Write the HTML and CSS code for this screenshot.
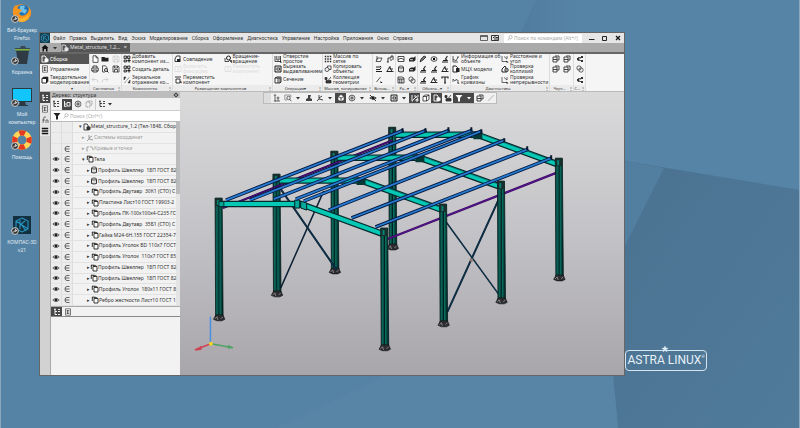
FILE: index.html
```html
<!DOCTYPE html>
<html lang="ru">
<head>
<meta charset="utf-8">
<title>КОМПАС-3D</title>
<link rel="stylesheet" href="styles.css">
</head>
<body>
<svg class="defs" aria-hidden="true">
  <defs>
    <symbol id="doc" viewBox="0 0 8 8"><path d="M2 .8h3l2 2v4.6H2zM5 .8v2h2" fill="#fff" stroke="#333" stroke-width=".8"/></symbol>
    <symbol id="folder" viewBox="0 0 8 8"><path d="M.5 2h3l.7.8h3.3V6.500H.5z" fill="#222"/></symbol>
    <symbol id="save" viewBox="0 0 8 8"><path d="M1 1h5l1 1v5H1zM2.500 1v2h3V1M2.500 7V4.500h3V7" fill="none" stroke="currentColor" stroke-width=".8"/></symbol>
    <symbol id="print" viewBox="0 0 8 8"><path d="M2 3V1h4v2M2 6H.8V3h6.400v3H6M2 5h4v2H2z" fill="none" stroke="#333" stroke-width=".9"/></symbol>
    <symbol id="preview" viewBox="0 0 8 8"><path d="M1.500.8h3l1.500 2V4M1.500.8V7H4" fill="none" stroke="#333" stroke-width=".8"/><circle cx="5" cy="5" r="1.500" fill="none" stroke="#222" stroke-width=".9"/><path d="m6 6 1.500 1.500" stroke="#222"/></symbol>
    <symbol id="undo" viewBox="0 0 8 8"><path d="M3 1.500 1 3.500l2 2M1 3.500h4q2 0 2 3" fill="none" stroke="#ccc" stroke-width=".8"/></symbol>
    <symbol id="redo" viewBox="0 0 8 8"><path d="m5 1.500 2 2-2 2M7 3.500H3q-2 0-2 3" fill="none" stroke="#ccc" stroke-width=".8"/></symbol>
    <symbol id="solid" viewBox="0 0 8 8"><path d="M1 2.500h4.500V7H1z" fill="#fff" stroke="#222"/><path d="M1 2.500 2.500 1H7L5.500 2.500zM7 1v4.500L5.500 7V2.500z" fill="#222" stroke="#222" stroke-width=".6"/></symbol>
    <symbol id="sheet" viewBox="0 0 8 8"><path d="M1.500.8h5v6.400h-5zM2.500 2.500h3M2.500 4h3M2.500 5.500h3M3.500 2v4" fill="#fff" stroke="#444" stroke-width=".7"/></symbol>
    <symbol id="assembly" viewBox="0 0 8 8"><path d="M1 1h3l1 1v5H1z" fill="none" stroke="currentColor" stroke-width=".9"/><path d="M3.500 4 5.500 3l2 1v2.500l-2 1-2-1z" fill="currentColor"/></symbol>
    <symbol id="add" viewBox="0 0 8 8"><path d="M1 1h2.500v2.500H1zM1 5h2.500v2H1zM4.500 1H7v2.500H4.500z" fill="#bbb" stroke="#222" stroke-width=".8"/><path d="M4.200 5.700h3.500M6 4v3.500" stroke="#111" stroke-width="1"/></symbol>
    <symbol id="mirror" viewBox="0 0 8 8"><path d="M1 1v3l2-3zM7 4v3H5z" fill="#333" stroke="#333" stroke-width=".5"/><path d="m1.500 7 5-6" stroke="#444" stroke-width=".7" stroke-dasharray="1.200 .6"/></symbol>
    <symbol id="mate" viewBox="0 0 8 8"><path d="M1 6.500V4l1.500-3H6v3L4 6.500z" fill="#fff" stroke="#222" stroke-width=".9"/><path d="M3 4h3.500v3H3z" fill="#222"/></symbol>
    <symbol id="rotate" viewBox="0 0 8 8"><circle cx="4.500" cy="3" r="2" fill="none" stroke="#222"/><path d="M1 3v3.500h4M5.500 5.500l2 2v-2z" fill="none" stroke="#222" stroke-width=".8"/></symbol>
    <symbol id="ghost" viewBox="0 0 8 8"><path d="M1 1.500h6v5H1zM4 1.500v5" fill="none" stroke="#ddd" stroke-width=".8"/></symbol>
    <symbol id="region" viewBox="0 0 8 8"><path d="M1 2h4v5H1zM3 2V1h4v4H5" fill="none" stroke="#888" stroke-width=".8" stroke-dasharray="1.500 .7"/></symbol>
    <symbol id="move" viewBox="0 0 8 8"><path d="M1 1h6M2 3h4v4H2z" fill="#fff" stroke="#222" stroke-width=".9"/><path d="M5.500 5.500 7.500 7.500v-2z"/></symbol>
    <symbol id="hole" viewBox="0 0 8 8"><path d="M1 1v5.500h5.500V1M2.800 1v4H5V1" fill="none" stroke="#222" stroke-width=".8"/><path d="m6 5.500 2 2h-2z"/></symbol>
    <symbol id="cut" viewBox="0 0 8 8"><path d="M1 1h6v6H1z" fill="#ddd" stroke="#222"/><path d="M3 5V3h2.500v2z" fill="#fff" stroke="#222" stroke-width=".8"/></symbol>
    <symbol id="section" viewBox="0 0 8 8"><path d="M1 2 3 1h4v5L6 7H1zM4 2v5M1 2h5v5" fill="#fff" stroke="#222" stroke-width=".9"/></symbol>
    <symbol id="grid" viewBox="0 0 8 8"><path d="M.8 1.500h6.400M.8 4h6.400M.8 6.500h6.400" stroke="#222" stroke-width="1.300" stroke-dasharray="1.400 1.100"/></symbol>
    <symbol id="copy" viewBox="0 0 8 8"><circle cx="3" cy="4.500" r="2" fill="none" stroke="#333" stroke-width=".8"/><path d="M3.500 2.500V1H7v3.500H5" fill="none" stroke="#333" stroke-width=".8"/></symbol>
    <symbol id="curve" viewBox="0 0 8 8"><path d="M1 6V2h2M4 1.500q3 0 3 3M.5 6h1M6.500 4.500h1" fill="none" stroke="#333" stroke-width=".8"/></symbol>
    <symbol id="collection" viewBox="0 0 8 8"><path d="M1 1.500h2v2H1zM4.500 4 7 1M2 4.500h5V7H2z" fill="#333" stroke="#333" stroke-width=".8"/></symbol>
    <symbol id="plane" viewBox="0 0 8 8"><path d="M1 6.500 2.500 3H7L5.500 6.500zM2 1v4" fill="none" stroke="#333" stroke-width=".8"/></symbol>
    <symbol id="axis" viewBox="0 0 8 8"><path d="M2 7V3h3V1M5 1h2v4M.8 7h2M4 5h2" fill="none" stroke="#222" stroke-width=".9"/></symbol>
    <symbol id="offset" viewBox="0 0 8 8"><path d="M1 2h4L6 1M1 4.500h4l1-2M1 6.500h6" fill="none" stroke="#222" stroke-width="1"/></symbol>
    <symbol id="datum" viewBox="0 0 8 8"><path d="M1 6.500 3.500 2 6 6.500zM.5 6.500h7M4 1v3h3" fill="none" stroke="#222" stroke-width=".9"/></symbol>
    <symbol id="line" viewBox="0 0 8 8"><path d="m1.500 6 4-5" stroke="#333" stroke-width=".8"/><path d="m5.500 5 2 2h-2z"/></symbol>
    <symbol id="box" viewBox="0 0 8 8"><path d="M1 1.500h6v5H1zM1 5l2-1.500h2L7 5" fill="#fff" stroke="#222" stroke-width=".8"/></symbol>
    <symbol id="bool" viewBox="0 0 8 8"><path d="M1 4 3 2.500h3L7.500 1v4L6 6.500H1z" fill="#222"/><path d="M2 4.700h3" stroke="#fff" stroke-width=".8"/></symbol>
    <symbol id="cyl" viewBox="0 0 8 8"><path d="M1.500 2v4.500q2.500 1 5 0V2" fill="#ddd" stroke="#222" stroke-width=".9"/><ellipse cx="4" cy="2" rx="2.500" ry="1" fill="#fff" stroke="#222" stroke-width=".8"/></symbol>
    <symbol id="table" viewBox="0 0 8 8"><path d="M1 1h4l2 1v5H1zM2.800 3v4M4.800 3v4M1 3h6" fill="none" stroke="#222" stroke-width=".8"/></symbol>
    <symbol id="link" viewBox="0 0 8 8"><rect x="1" y="1" width="4" height="4" rx="1.500" fill="none" stroke="#333" stroke-width=".8"/><rect x="3" y="3" width="4" height="4" rx="1.500" fill="none" stroke="#333" stroke-width=".8"/></symbol>
    <symbol id="pen" viewBox="0 0 8 8"><path d="M1 7 2 4l3-3 2 1-3 3z" fill="#777" stroke="#222" stroke-width=".8"/></symbol>
    <symbol id="note" viewBox="0 0 8 8"><path d="M1 7h6M2 5.500h4L4.500 4l2-3" fill="none" stroke="#222" stroke-width="1.100"/></symbol>
    <symbol id="target" viewBox="0 0 8 8"><ellipse cx="4" cy="4" rx="3" ry="2.300" fill="none" stroke="#222" stroke-width=".8"/><path d="M3 3h2v2H3z"/></symbol>
    <symbol id="letter" viewBox="0 0 8 8"><path d="M1 2.500V1h6v1.500M4 1v6M3 7h2" fill="none" stroke="#222" stroke-width="1.200"/></symbol>
    <symbol id="info" viewBox="0 0 8 8"><path d="M1 1v6h5M1 4l3 2 2-4M5 2h2" fill="none" stroke="#333" stroke-width=".8"/></symbol>
    <symbol id="mass" viewBox="0 0 8 8"><path d="M1 1h3l1.500 1.500V7H1z" fill="#fff" stroke="#222"/><path d="M4 3h3.500v4H4z" fill="#222"/></symbol>
    <symbol id="graph" viewBox="0 0 8 8"><path d="M1 6V3l2 2 1.500-2 1 2H7" fill="none" stroke="#444" stroke-width=".8"/><path d="m5.500 5.500 2 2h-2z"/></symbol>
    <symbol id="measure" viewBox="0 0 8 8"><path d="M1 1v5.500h5M3 1.500 6 4V1" fill="none" stroke="#444" stroke-width=".8"/><path d="m5.500 5.500 2 2h-2z"/></symbol>
    <symbol id="collide" viewBox="0 0 8 8"><path d="M1 7V4l3-3 1.500 3v3z" fill="#fff" stroke="#222"/><circle cx="5.500" cy="5" r="1.800" fill="#999" stroke="#222" stroke-width=".7"/></symbol>
    <symbol id="draw" viewBox="0 0 8 8"><path d="M1 2h4v5H1zM3 1h4v4H5M1 4.500h4" fill="none" stroke="#333" stroke-width=".9"/></symbol>
    <symbol id="connect" viewBox="0 0 8 8"><path d="M2 2.500h3l-3 3h4" fill="none" stroke="#333" stroke-width=".8"/><path d="M5 1h2v2H5zM5 5h2v2H5zM1 3h2v2H1z" fill="#333"/></symbol>
    <symbol id="tree" viewBox="0 0 8 8"><path d="M2 1v5.500h2M2 3.500h2M1 1.200h2M5 1.500h2M5 3.500h2M5 6.500h2" fill="none" stroke="currentColor" stroke-width=".9"/></symbol>
    <symbol id="branch" viewBox="0 0 8 8"><path d="M1.500 1v5.500h2M1.500 4h2M4 2.500h3v3.500H4z" fill="none" stroke="currentColor" stroke-width=".9"/></symbol>
    <symbol id="corner" viewBox="0 0 8 8"><path d="M2 .8V7h5M.8 1h2.400M5 2.500v4.500M3.500 4h3M.8 7h2" fill="none" stroke="#444" stroke-width=".8"/></symbol>
    <symbol id="fx" viewBox="0 0 8 8"><path d="M5 1H3L2 7M1 4h3M5 7V4h2v3" fill="none" stroke="#555" stroke-width=".8"/></symbol>
    <symbol id="bars" viewBox="0 0 8 8"><path d="M.8 1.500h6.400M.8 4h6.400M.8 6.500h6.400" stroke="#111" stroke-width="1.600"/></symbol>
    <symbol id="filter" viewBox="0 0 8 8"><path d="M.5 1h7L5 4v3.500H3V4z" fill="currentColor"/></symbol>
    <symbol id="zoom" viewBox="0 0 8 8"><circle cx="4.700" cy="3" r="2.200" fill="none" stroke="currentColor" stroke-width=".8"/><path d="M3.200 4.600.8 7.200" stroke="currentColor" stroke-width=".9"/></symbol>
    <symbol id="zoomarea" viewBox="0 0 8 8"><path d="M3 6H.8V1h6v2" fill="none" stroke="#777" stroke-width=".7"/><circle cx="4.500" cy="4" r="1.700" fill="none" stroke="#444" stroke-width=".8"/><path d="m5.700 5.200 1.600 2" stroke="#444" stroke-width=".9"/></symbol>
    <symbol id="brush" viewBox="0 0 8 8"><path d="m1 7 2-2 4-4" fill="none" stroke="#ccc" stroke-width="1.100"/></symbol>
    <symbol id="gear" viewBox="0 0 8 8"><circle cx="4" cy="4" r="2" fill="none" stroke="#333" stroke-width="1.300"/><path d="M4 .8v1M4 6.200v1M.8 4h1M6.200 4h1" stroke="#333"/></symbol>
    <symbol id="eye" viewBox="0 0 8 8"><path d="M.8 4Q4 .8 7.200 4 4 7.200.8 4z" fill="#bbb" stroke="#444" stroke-width=".7"/><circle cx="4" cy="4" r="1.300" fill="#222"/></symbol>
    <symbol id="in" viewBox="0 0 8 8"><path d="M6.500 1.500H4Q2 1.500 2 4t2 2.500h2.500M2 4h4.500" fill="none" stroke="#444" stroke-width=".8"/></symbol>
    <symbol id="body" viewBox="0 0 8 8"><path d="M3 2.500h4V7H3zM1 1.200h3.500M1.300 1v4" fill="#fff" stroke="#222" stroke-width=".9"/><path d="M3 1.200h3l1 1.300H3z" fill="#333"/></symbol>
    <symbol id="home" viewBox="0 0 8 8"><path d="M.5 4 4 .8 7.500 4H6.500v3.500H5V5H3v2.500H1.500V4z" fill="#111"/></symbol>
    <symbol id="cube" viewBox="0 0 8 8"><path d="M1 2.500h3.500V7H1zM1 2.500 3 1h4v4.500L4.500 7M7 1 4.500 2.500" fill="#fff" stroke="#111" stroke-width=".7"/></symbol>
    <symbol id="shaded" viewBox="0 0 8 8"><path d="M1 2.500 4 4v3.600L1 6zM1 2.500 4 .6l3 1.900L4 4zM7 2.500 4 4v3.600L7 6z" fill="#fff" stroke="#333" stroke-width=".5"/></symbol>
    <symbol id="wire" viewBox="0 0 8 8"><circle cx="4" cy="4" r="3" fill="none" stroke="#444" stroke-width=".7"/><path d="M4 1v6M1.500 2.500 6.500 5.500M6.500 2.500l-5 3" stroke="#444" stroke-width=".7"/></symbol>
    <symbol id="orient" viewBox="0 0 8 8"><path d="M3 1v4l-2 2M3 5l4 1M3 4l3-2" fill="none" stroke="#333" stroke-width=".9"/></symbol>
    <symbol id="pin" viewBox="0 0 8 8"><path d="M3 1h3l-1 3 2 1v2H1V5l2-1z" fill="#444"/></symbol>
    <symbol id="hide" viewBox="0 0 8 8"><path d="M.8 4Q4 1 7.200 4 4 7 .8 4zM1 1l6 6" fill="none" stroke="#222" stroke-width=".9"/><circle cx="4" cy="4" r="1.100"/></symbol>
    <symbol id="swap" viewBox="0 0 8 8"><path d="M1 1v6h1M7 1v2M3 2h2l2 3M1.500 6.500 5 3M5 5.500h2v1.500H5z" fill="none" stroke="currentColor" stroke-width=".9"/></symbol>
    <symbol id="arrow" viewBox="0 0 8 8"><path d="M2 3h4L4 5.500z" fill="currentColor"/></symbol>
    <symbol id="shortcut" viewBox="0 0 8 8"><circle cx="4" cy="4" r="3.400" fill="#333" stroke="#ddd" stroke-width=".9"/><path d="M2.500 5.500q0-2 3-2M4 2l1.700 1.500L4.300 5" fill="none" stroke="#fff" stroke-width=".8"/></symbol>
  </defs>
</svg>

<svg class="wallpaper" viewBox="0 0 800 428" preserveAspectRatio="none" aria-hidden="true">
  <defs>
    <linearGradient id="fold" x1="0" y1="0" x2="1" y2="1"><stop offset="0" stop-color="#4a7190"/><stop offset="1" stop-color="#517b9b"/></linearGradient>
    <linearGradient id="upper" x1="0" y1="0" x2="1" y2="0"><stop offset="0" stop-color="#507d9f"/><stop offset=".2" stop-color="#5684a7"/></linearGradient>
  </defs>
  <path d="M0 0h800v428H0z" fill="#5583a5"/>
  <path d="M536 0h264v190L628 162l-107-130z" fill="url(#upper)"/>
  <path d="m625 161 175 29v238H618l-5-55z" fill="url(#fold)"/>
  <path d="m625 161 39 7-39 78z" fill="#527e9f"/>
  <path d="M383 376 276 428h342l-5-52z" fill="#5884a5"/>
  <path d="M0 0h1v428H0zM799 0h1v428h-1z" fill="#8aa9c0"/>
</svg>

<nav class="desktop" aria-label="Рабочий стол">
  <a class="shortcut firefox" href="#">
    <svg class="pic" viewBox="0 0 20 20"><circle cx="10" cy="10" r="9" fill="#f5931e"/><circle cx="11" cy="8" r="6.500" fill="#2273b5"/><path d="M8 3q3-1 5 0l-1 3 3 1-2 4-3-2-3 1z" fill="#6fc0e8"/><path d="M1 7q1-5 4-5-1 3 2 4l3 1-3 3q1 4 6 2 4-2 4-8 4 6 0 11-5 5-11 2-6-4-5-10z" fill="#f7941e"/><path d="M2 12q3 5 9 3 4-1 6-5 0 8-7 9-6 0-8-7z" fill="#fbb42c"/></svg>
    <svg class="mark"><use href="#shortcut"/></svg>
    <span>Веб-браузер<br>Firefox</span>
  </a>
  <a class="shortcut trash" href="#">
    <svg class="pic" viewBox="0 0 20 20"><path d="M4 5h13l-2 14H6z" fill="#2e3b45"/><path d="M3 3h5l1-2h4l1 2h4v3H3z" fill="#394852"/><path d="M3 4h15v1.500H3z" fill="#7fb23e"/></svg>
    <svg class="mark"><use href="#shortcut"/></svg>
    <span>Корзина</span>
  </a>
  <a class="shortcut computer" href="#">
    <svg class="pic" viewBox="0 0 20 20"><path d="M0 1h20v14H0z" fill="#2c3940"/><path d="M1 2h18v12H1z" fill="#12c6fb"/><path d="M8 15h5l1 3h2v1H5v-1h2z" fill="#2c3940"/></svg>
    <svg class="mark"><use href="#shortcut"/></svg>
    <span>Мой<br>компьютер</span>
  </a>
  <a class="shortcut help" href="#">
    <svg class="pic" viewBox="0 0 20 20"><circle cx="10" cy="10" r="7.200" fill="none" stroke="#ffd65a" stroke-width="5.200"/><circle cx="10" cy="10" r="7.200" fill="none" stroke="#e33b22" stroke-width="5.200" stroke-dasharray="5.650" stroke-dashoffset="2.800"/></svg>
    <svg class="mark"><use href="#shortcut"/></svg>
    <span>Помощь</span>
  </a>
  <a class="shortcut kompas" href="#">
    <svg class="pic" viewBox="0 0 20 20"><path d="M1 1h18v18H1z" fill="#12303f"/><path d="m10 3 6 3v8l-6 3-6-3V6zM4 6l12 8M8 5v9M8 10l5-4M9 9l5 7" fill="none" stroke="#2794c0" stroke-width="1.100"/></svg>
    <svg class="mark"><use href="#shortcut"/></svg>
    <span>КОМПАС-3D<br>v21</span>
  </a>
</nav>

<main class="window">
  <header class="menubar">
    <svg class="applogo" viewBox="0 0 10 10"><path d="M0 0h10v10H0z" fill="#154257"/><path d="m5 1 3.500 2v4L5 9 1.500 7V3zM3.500 3v4M3.500 5 6 3M4.500 5 7 7" fill="none" stroke="#3b9cbd" stroke-width=".7"/></svg>
    <nav class="menu"><a href="#">Файл</a><a href="#">Правка</a><a href="#">Выделить</a><a href="#">Вид</a><a href="#">Эскиз</a><a href="#">Моделирование</a><a href="#">Сборка</a><a href="#">Оформление</a><a href="#">Диагностика</a><a href="#">Управление</a><a href="#">Настройка</a><a href="#">Приложения</a><a href="#">Окно</a><a href="#">Справка</a></nav>
    <button class="tiny" aria-label="Экран"><svg viewBox="0 0 8 8"><path d="M.5 1.500h7v5h-7zM.5 2.500h7" fill="none" stroke="#444" stroke-width=".8"/></svg></button>
    <button class="tiny" aria-label="Панели"><svg viewBox="0 0 8 8"><path d="M.5 1.500h7v5h-7zM4 1.500v5M2 3.500h1M5 3.500h2M5 5h2" fill="none" stroke="#222" stroke-width=".9"/></svg></button>
    <label class="search top"><svg><use href="#zoom"/></svg><input type="text" placeholder="Поиск по командам (Alt+/)" aria-label="Поиск по командам"></label>
    <div class="controls">
      <button aria-label="Свернуть"><svg viewBox="0 0 8 8"><path d="M1 5.500h5.500" stroke="#222"/></svg></button>
      <button aria-label="Развернуть"><svg viewBox="0 0 8 8"><path d="M1.500 2.500h4v4h-4z" fill="none" stroke="#222"/></svg></button>
      <button aria-label="Закрыть"><svg viewBox="0 0 8 8"><path d="m2 2 4 4M6 2 2 6" stroke="#111" stroke-width="1.200"/></svg></button>
    </div>
  </header>

  <div class="tabs">
    <button aria-label="Главная"><svg><use href="#home"/></svg></button>
    <button aria-label="Список"><svg><use href="#arrow"/></svg></button>
    <button class="tab"><svg><use href="#assembly"/></svg><span>Metal_structure_1.2...</span><b>×</b></button>
  </div>

  <div class="ribbon">
    <section class="modes">
      <div class="rows">
        <button class="cmd on"><svg><use href="#assembly"/></svg><span>Сборка</span></button>
        <button class="cmd"><svg><use href="#sheet"/></svg><span>Управление</span></button>
        <button class="cmd"><svg><use href="#solid"/></svg><span>Твердотельное<br>моделирование</span></button>
      </div>
      <h2><i>▾</i></h2>
    </section>
    <section>
      <div class="icons three">
        <button aria-label="Создать"><svg><use href="#doc"/></svg></button><button aria-label="Открыть"><svg><use href="#folder"/></svg></button><button class="off" aria-label="Сохранить"><svg><use href="#save"/></svg></button>
        <button aria-label="Печать"><svg><use href="#print"/></svg></button><button aria-label="Просмотр"><svg><use href="#preview"/></svg></button><button aria-label="Сохранить как"><svg><use href="#save"/></svg></button>
        <button aria-label="Отменить"><svg><use href="#undo"/></svg></button><button aria-label="Повторить"><svg><use href="#redo"/></svg></button>
      </div>
      <h2>Системная<i>⋮</i></h2>
    </section>
    <section>
      <div class="rows">
        <button class="cmd"><svg><use href="#add"/></svg><span>Добавить<br>компонент из...</span></button>
        <button class="cmd"><svg><use href="#add"/></svg><span>Создать деталь</span></button>
        <button class="cmd"><svg><use href="#mirror"/></svg><span>Зеркальное<br>отражение ко...</span></button>
      </div>
      <h2>Компоненты<i>⋮</i></h2>
    </section>
    <section>
      <div class="rows two">
        <button class="cmd"><svg><use href="#mate"/></svg><span>Совпадение</span></button>
        <button class="cmd"><svg><use href="#rotate"/></svg><span>Вращение-<br>вращение</span></button>
        <button class="cmd faint" disabled><svg><use href="#ghost"/></svg><span>Включить<br>фиксацию</span></button>
        <button class="cmd faint" disabled><svg><use href="#ghost"/></svg><span>Разместить<br>компонент</span></button>
        <button class="cmd"><svg><use href="#move"/></svg><span>Переместить<br>компонент</span></button>
      </div>
      <h2>Размещение компонентов<i>⋮</i></h2>
    </section>
    <section>
      <div class="rows">
        <button class="cmd"><svg><use href="#hole"/></svg><span>Отверстие<br>простое</span></button>
        <button class="cmd"><svg><use href="#cut"/></svg><span>Вырезать<br>выдавливанием</span></button>
        <button class="cmd"><svg><use href="#section"/></svg><span>Сечение</span></button>
      </div>
      <h2>Операции<i>▾</i><i>⋮</i></h2>
    </section>
    <section>
      <div class="rows">
        <button class="cmd"><svg><use href="#grid"/></svg><span>Массив по<br>сетке</span></button>
        <button class="cmd"><svg><use href="#copy"/></svg><span>Копировать<br>объекты</span></button>
        <button class="cmd"><svg><use href="#collection"/></svg><span>Коллекция<br>геометрии</span></button>
      </div>
      <h2>Массив, копирование<i>⋮</i></h2>
    </section>
    <section>
      <div class="icons pair">
        <button aria-label="Плоскость"><svg><use href="#plane"/></svg></button><button aria-label="Ось"><svg><use href="#axis"/></svg></button>
        <button aria-label="Смещение"><svg><use href="#offset"/></svg></button><button aria-label="База"><svg><use href="#datum"/></svg></button>
        <button aria-label="Линия"><svg><use href="#line"/></svg></button>
      </div>
      <h2>Вспом...<i>⋮</i></h2>
    </section>
    <section>
      <div class="icons pair">
        <button aria-label="Размер"><svg><use href="#box"/></svg></button><button aria-label="Вычитание"><svg><use href="#bool"/></svg></button>
        <button aria-label="Цилиндр"><svg><use href="#cyl"/></svg></button><button aria-label="Объединение"><svg><use href="#bool"/></svg></button>
        <button aria-label="Таблица"><svg><use href="#table"/></svg></button><button aria-label="Связь"><svg><use href="#link"/></svg></button>
      </div>
      <h2>Ра...<i>▾</i><i>⋮</i></h2>
    </section>
    <section>
      <div class="icons three">
        <button aria-label="Резьба"><svg><use href="#pen"/></svg></button><button aria-label="Центр"><svg><use href="#target"/></svg></button><button aria-label="Выноска"><svg><use href="#note"/></svg></button>
        <button aria-label="Шероховатость"><svg><use href="#note"/></svg></button><button aria-label="Отметка"><svg><use href="#note"/></svg></button><button aria-label="Допуск"><svg><use href="#datum"/></svg></button>
        <button aria-label="Клеймо"><svg><use href="#note"/></svg></button><button aria-label="Основание"><svg><use href="#datum"/></svg></button><button aria-label="Текст"><svg><use href="#letter"/></svg></button>
      </div>
      <h2>Обозна...<i>▾</i><i>⋮</i></h2>
    </section>
    <section>
      <div class="rows two">
        <button class="cmd"><svg><use href="#info"/></svg><span>Информация об<br>объекте</span></button>
        <button class="cmd"><svg><use href="#measure"/></svg><span>Расстояние и<br>угол</span></button>
        <button class="cmd"><svg><use href="#mass"/></svg><span>МЦХ модели</span></button>
        <button class="cmd"><svg><use href="#collide"/></svg><span>Проверка<br>коллизий</span></button>
        <button class="cmd"><svg><use href="#graph"/></svg><span>График<br>кривизны</span></button>
        <button class="cmd"><svg><use href="#measure"/></svg><span>Проверка<br>непрерывности</span></button>
      </div>
      <h2>Диагностика<i>⋮</i></h2>
    </section>
    <section>
      <div class="icons pair">
        <button aria-label="Чертёж"><svg><use href="#draw"/></svg></button><button aria-label="Вид"><svg><use href="#draw"/></svg></button>
        <button aria-label="Лист"><svg><use href="#draw"/></svg></button><button aria-label="Разрез"><svg><use href="#draw"/></svg></button>
      </div>
      <h2>Черт...<i>⋮</i></h2>
    </section>
    <section>
      <div class="icons one">
        <button aria-label="Соединение"><svg><use href="#connect"/></svg></button>
        <button aria-label="Узел"><svg><use href="#link"/></svg></button>
        <button aria-label="Ветвь"><svg><use href="#connect"/></svg></button>
      </div>
      <h2>С...<i>⋮</i></h2>
    </section>
  </div>

  <div class="work">
    <div class="strip">
      <button class="on" aria-label="Дерево"><svg><use href="#tree"/></svg></button>
      <button aria-label="Параметры"><svg><use href="#sheet"/></svg></button>
      <button aria-label="Переменные"><svg><use href="#fx"/></svg></button>
      <button aria-label="Слои"><svg><use href="#bars"/></svg></button>
    </div>
    <aside class="panel">
      <header><h1>Дерево: структура</h1><button aria-label="Настройки"><svg><use href="#gear"/></svg></button></header>
      <div class="tools">
        <button aria-label="Список"><svg><use href="#tree"/></svg></button>
        <button class="on" aria-label="Структура"><svg><use href="#branch"/></svg></button>
        <button aria-label="Состав"><svg><use href="#wire"/></svg></button>
        <button aria-label="Область"><svg><use href="#region"/></svg></button>
        <button class="split" aria-label="Вид дерева"><svg><use href="#tree"/></svg><svg><use href="#arrow"/></svg></button>
      </div>
      <div class="find"><svg><use href="#filter"/></svg><label class="search"><svg><use href="#zoom"/></svg><input type="text" placeholder="Поиск (Ctrl+/)" aria-label="Поиск в дереве"></label></div>
      <ul class="tree">
        <li><i></i><i></i><span class="l0"><b>▾</b><svg><use href="#assembly"/></svg>Metal_structure_1.2 (Тел-1848, Сбор</span></li>
        <li class="dim"><i></i><i></i><span class="l1"><b>▸</b><svg><use href="#orient"/></svg>Системы координат</span></li>
        <li class="dim"><i></i><i><svg><use href="#in"/></svg></i><span class="l1"><b>▸</b><svg><use href="#curve"/></svg>Кривые и точки</span></li>
        <li><i><svg><use href="#eye"/></svg></i><i><svg><use href="#in"/></svg></i><span class="l1"><b>▾</b><svg><use href="#body"/></svg>Тела</span></li>
        <li><i><svg><use href="#eye"/></svg></i><i><svg><use href="#in"/></svg></i><span class="l2"><b>▸</b><svg><use href="#cyl"/></svg>Профиль Швеллер&nbsp; 18П ГОСТ 82</span></li>
        <li><i><svg><use href="#eye"/></svg></i><i><svg><use href="#in"/></svg></i><span class="l2"><b>▸</b><svg><use href="#cyl"/></svg>Профиль Швеллер&nbsp; 18П ГОСТ 82</span></li>
        <li><i><svg><use href="#eye"/></svg></i><i><svg><use href="#in"/></svg></i><span class="l2"><b>▸</b><svg><use href="#body"/></svg>Профиль Двутавр&nbsp; 30К1 (СТО) С</span></li>
        <li><i><svg><use href="#eye"/></svg></i><i><svg><use href="#in"/></svg></i><span class="l2"><b>▸</b><svg><use href="#body"/></svg>Пластина Лист10 ГОСТ 19903-2</span></li>
        <li><i><svg><use href="#eye"/></svg></i><i><svg><use href="#in"/></svg></i><span class="l2"><b>▸</b><svg><use href="#body"/></svg>Профиль ПК-100х100х4-С235 ГС</span></li>
        <li><i><svg><use href="#eye"/></svg></i><i><svg><use href="#in"/></svg></i><span class="l2"><b>▸</b><svg><use href="#body"/></svg>Профиль Двутавр&nbsp; 35Б1 (СТО) С</span></li>
        <li><i><svg><use href="#eye"/></svg></i><i><svg><use href="#in"/></svg></i><span class="l2"><b>▸</b><svg><use href="#body"/></svg>Гайка М24-6Н.155 ГОСТ 22354-7</span></li>
        <li><i><svg><use href="#eye"/></svg></i><i><svg><use href="#in"/></svg></i><span class="l2"><b>▸</b><svg><use href="#body"/></svg>Профиль Уголок ВD 110х7 ГОСТ</span></li>
        <li><i><svg><use href="#eye"/></svg></i><i><svg><use href="#in"/></svg></i><span class="l2"><b>▸</b><svg><use href="#body"/></svg>Профиль Уголок&nbsp; 110х7 ГОСТ 85</span></li>
        <li><i><svg><use href="#eye"/></svg></i><i><svg><use href="#in"/></svg></i><span class="l2"><b>▸</b><svg><use href="#body"/></svg>Профиль Швеллер&nbsp; 18П ГОСТ 82</span></li>
        <li><i><svg><use href="#eye"/></svg></i><i><svg><use href="#in"/></svg></i><span class="l2"><b>▸</b><svg><use href="#body"/></svg>Профиль Швеллер&nbsp; 18П ГОСТ 82</span></li>
        <li><i><svg><use href="#eye"/></svg></i><i><svg><use href="#in"/></svg></i><span class="l2"><b>▸</b><svg><use href="#body"/></svg>Профиль Уголок&nbsp; 180х11 ГОСТ 8</span></li>
        <li><i><svg><use href="#eye"/></svg></i><i><svg><use href="#in"/></svg></i><span class="l2"><b>▸</b><svg><use href="#body"/></svg>Ребро жесткости Лист10 ГОСТ 1</span></li>
      </ul>
      <div class="views">
        <button class="on" aria-label="Дерево"><svg><use href="#tree"/></svg></button>
        <button aria-label="Таблица"><svg><use href="#sheet"/></svg></button>
      </div>
    </aside>
    <section class="viewport">
      <svg class="scene" viewBox="180 92 445 283" aria-label="Металлоконструкция">
        <defs>
          <linearGradient id="steel" x1="0" y1="0" x2="1" y2="0"><stop offset="0" stop-color="#042b2b"/><stop offset=".2" stop-color="#0b695c"/><stop offset=".4" stop-color="#064640"/><stop offset=".48" stop-color="#021c1c"/><stop offset=".6" stop-color="#09705f"/><stop offset=".8" stop-color="#05403c"/><stop offset="1" stop-color="#021c1c"/></linearGradient>
          <symbol id="column" viewBox="0 0 14 124" overflow="visible">
            <path d="M3.200 0h7l1 120H3.700z" fill="url(#steel)" stroke="#021c1c" stroke-width=".8"/>
            <path d="M3 0h7.500v8H3z" fill="#17302d"/><path d="M5 2h2v5H5z" fill="#0b8273"/>
            <path d="M4 117 1.500 121.500 5 123h5l3-1.500-2-4.500z" fill="#2b2d30" stroke="#111" stroke-width=".6"/><path d="m3 121 2-2 1 3M9 121l2-2" stroke="#a1989b" stroke-width=".8" fill="none"/>
          </symbol>
        </defs>
        <use href="#column" x="386" y="127" width="14" height="124"/>
        <use href="#column" x="328" y="151" width="14" height="124"/>
        <use href="#column" x="270" y="174" width="14" height="124"/>
        <g stroke="#0b2034" stroke-width="2" fill="none"><path d="m281 189 56 81M500 198l-52 114"/><path d="m324 191-43 97M446 221l56 77" stroke-width="1.500"/></g>
        <g stroke="#0d4b68" stroke-width=".5"><path d="m281 189 56 81M446 221l56 77M500 198l-52 114"/></g>
        <path d="m471 258 3 1-1 3-3-1z" fill="#947c72"/>
        <path d="m223 208 170-68" stroke="#260048" stroke-width="2.200"/><path d="m223 208 170-68" stroke="#5b1590" stroke-width=".8"/>
        <path d="m388 239 171-67" stroke="#380964" stroke-width="2.200"/><path d="m388 239 171-67" stroke="#5b1590" stroke-width="1"/>
        <g fill="none" stroke-linejoin="round">
          <g stroke="#042a2d" stroke-width="6.500"><path d="M396 134.500h82l80 29.500M338 157.500h82l82 29.500M280 180.500h82l81 29.500M220 204h81l82 30"/></g>
          <g stroke="#06c9b5" stroke-width="4"><path d="M396 134.500h82l80 29.500M338 157.500h82l82 29.500M280 180.500h82l81 29.500M220 204h81l82 30"/></g>
          <g stroke="#0a6e6c" stroke-width=".7"><path d="M396 132.500h82l80 29.500M338 155.500h82l82 29.500M280 178.500h82l81 29.500"/></g>
        </g>
        <g fill="#083836"><path d="M474 131h9v8h-9zM416 154h9v8h-9zM357 177h9v8h-9z"/></g>
        <path d="M295 200h5v8h-5zM301 201l6 2v7l-6-2z" fill="#07a99d" stroke="#021e22"/>
        <g stroke="#041b42" stroke-width="3.600"><path d="m226 200 178-70M250 200l177-70M274 199l176-69M296 199l177-69M304 201l178-70M329 210l176-70M352 218l177-69M376 227l176-69"/></g>
        <g stroke="#287bd0" stroke-width="1.800"><path d="m226 200 178-70M250 200l177-70M274 199l176-69M296 199l177-69M304 201l178-70M329 210l176-70M352 218l177-69M376 227l176-69"/></g>
        <path d="M403 128v4M426 128v4M449 127v4M472 127v4M482 129v4M505 138v4M528 146v4M552 155v4" stroke="#03182f" stroke-width="2"/>
        <use href="#column" x="553" y="158" width="14" height="124"/>
        <use href="#column" x="495" y="181" width="14" height="124"/>
        <use href="#column" x="437" y="204" width="14" height="124"/>
        <use href="#column" x="378" y="228" width="14" height="124"/>
        <use href="#column" x="212" y="198" width="14" height="124"/>
        <path d="M219 201.500h5v5h-5z" fill="#06a494" stroke="#021e22" stroke-width=".8"/>
        <path d="M210.500 344v-27" stroke="#4b8fe0" stroke-width="1.500"/>
        <path d="m211 344 22 4" stroke="#4fa265" stroke-width="1.500"/><path d="m211 344-16 6" stroke="#d24350" stroke-width="1.500"/>
        <path d="m201 346-6 5 7-1z" fill="#c45"/><path d="m228 345 6 3-6 1z" fill="#4fa265"/>
        <circle cx="211" cy="344" r="2" fill="#f4d22c"/>
      </svg>
      <div class="viewbar">
        <button class="grip" aria-label="Перемещение"></button>
        <button aria-label="Координаты"><svg><use href="#corner"/></svg></button>
        <button class="split" aria-label="Масштаб"><svg><use href="#zoomarea"/></svg><svg><use href="#arrow"/></svg></button>
        <button aria-label="Закрепить"><svg><use href="#pin"/></svg></button>
        <button class="split" aria-label="Ориентация"><svg><use href="#orient"/></svg><svg><use href="#arrow"/></svg></button>
        <button class="on" aria-label="Полутоновое"><svg><use href="#shaded"/></svg></button>
        <button class="split" aria-label="Каркас"><svg><use href="#wire"/></svg><svg><use href="#arrow"/></svg></button>
        <button class="split" aria-label="Скрыть"><svg><use href="#hide"/></svg><svg><use href="#arrow"/></svg></button>
        <button class="split" aria-label="Сечение"><svg><use href="#cut"/></svg><svg><use href="#arrow"/></svg></button>
        <button class="on" aria-label="Перестроить"><svg><use href="#swap"/></svg></button>
        <button aria-label="Тело"><svg><use href="#cube"/></svg></button>
        <button class="on" aria-label="Контур"><svg><use href="#assembly"/></svg></button>
        <button aria-label="Слой"><svg><use href="#collection"/></svg></button>
        <button class="split on" aria-label="Фильтр"><svg><use href="#filter"/></svg><svg><use href="#arrow"/></svg></button>
        <button aria-label="Измерить"><svg><use href="#draw"/></svg></button>
        <button class="off" aria-label="Кисть"><svg><use href="#brush"/></svg></button>
      </div>
    </section>
  </div>
</main>

<div class="astra"><svg viewBox="0 0 10 10"><path d="m5 .5 1.300 3 3.300.2-2.600 2 .9 3.300L5 7.200 2.100 9 3 5.700.4 3.700l3.300-.2z" fill="#d9ebf8"/></svg><span>ASTRA LINUX</span><sup>®</sup></div>
</body>
</html>
```

FILE: styles.css
```css
* { box-sizing: border-box; }

body {
  margin: 0;
  height: 100vh;
  overflow: hidden;
  position: relative;
  background: #5583a5;
  color: #333;
  font: 5px/5px "Noto Sans", "Open Sans", sans-serif;
}

button, input { font: inherit; color: inherit; border: 0; padding: 0; margin: 0; background: none; }
button { display: flex; align-items: center; justify-content: center; text-align: left; }
a { color: inherit; text-decoration: none; }
h1, h2 { margin: 0; font-weight: 400; font-size: inherit; }
svg { display: block; width: 8px; height: 8px; flex: none; }
i, b { font-style: normal; font-weight: 400; }
.defs { position: absolute; width: 0; height: 0; }
.wallpaper { position: absolute; inset: 0; width: 100%; height: 100%; }

/* Desktop shortcuts */
.shortcut {
  position: absolute;
  left: 2px;
  width: 40px;
  display: flex;
  flex-direction: column;
  align-items: center;
  gap: 3px;
  color: #e4edf3;
  font-size: 5px;
  line-height: 8px;
  text-align: center;
}
.pic { width: 20px; height: 20px; }
.mark { position: absolute; left: 9px; top: 12px; }
.firefox { top: 3px; }
.trash { top: 45px; }
.computer { top: 87px; }
.help { top: 130px; }
.kompas { top: 215px; }

/* Application window */
.window {
  position: absolute;
  inset: 32px 175px 52px 39px;
  display: flex;
  flex-direction: column;
  background: #efefef;
  border: 1px solid #666;
}

.menubar { display: flex; align-items: center; height: 10px; background: #e6e6e6; }
.applogo { width: 10px; height: 10px; }
.menu { display: flex; gap: 4px; margin: 0 auto 0 3px; font-family: Roboto, "Noto Sans", sans-serif; white-space: nowrap; }
.tiny { margin-right: 3px; }
.search { display: flex; align-items: center; gap: 1px; color: #999; background: #fff; }
.search svg { width: 6px; height: 6px; }
.search input { flex: 1; min-width: 0; height: 8px; outline: 0; }
.search input::placeholder { color: #aaa; opacity: 1; }
.search.top { width: 78px; height: 9px; padding-left: 3px; margin-left: 2px; }
.controls { display: flex; gap: 5px; margin: 0 2px 0 6px; }

.tabs { display: flex; height: 11px; background: #aaa; border-bottom: 2px solid #666; }
.tabs button { width: 10px; }
.tabs .tab { width: 69px; gap: 1px; background: #555; color: #e3e3e3; margin-left: 1px; }
.tab b { font-size: 6px; margin-left: auto; padding-right: 3px; }

/* Ribbon */
.ribbon {
  display: grid;
  grid-template-columns: 50px 32px 51px 100px 50px 50px 23px 22px 33px 99px 24px 12px;
  height: 38px;
  background: #f5f5f5;
  border-bottom: 1px solid #bbb;
}
.ribbon section { display: flex; flex-direction: column; border-right: 1px solid #ddd; min-width: 0; }
.rows, .icons { display: grid; grid-template-rows: repeat(3, 1fr); flex: 1; }
.rows.two, .icons.pair { grid-template-columns: 1fr 1fr; }
.icons.three { grid-template-columns: 1fr 1fr 1fr; }
.cmd { justify-content: flex-start; gap: 1px; padding-left: 1px; white-space: nowrap; min-width: 0; }
.cmd.on { background: #555; color: #fff; }
.faint { color: #ddd; }
.off { color: #ccc; }
.ribbon h2 {
  display: flex;
  align-items: center;
  justify-content: center;
  height: 6px;
  font-size: 4px;
  background: #ebebeb;
  white-space: nowrap;
}
.ribbon h2 i:last-child { margin-left: auto; }
.ribbon h2::before { content: ""; margin-right: auto; }
.modes h2 i { margin-right: auto; }

/* Work area */
.work { display: flex; flex: 1; min-height: 0; }
.strip { display: flex; flex-direction: column; width: 11px; background: #d2d2d2; border-right: 1px solid #aaa; }
.strip button { height: 11px; background: #e5e5e5; }
.strip .on, .tools .on, .views .on, .viewbar .on { background: #484848; color: #fff; }

.panel { display: flex; flex-direction: column; width: 129px; background: #f2f2f2; }
.panel header { display: flex; align-items: center; justify-content: space-between; height: 6px; padding: 0 1px; background: #bdbdbd; }
.panel header svg { width: 6px; height: 6px; }
.tools { display: flex; align-items: center; gap: 1px; height: 13px; border-bottom: 1px solid #ccc; }
.tools button { width: 10px; height: 11px; }
.tools .split { width: 20px; border-left: 1px solid #ccc; }
.find { display: flex; align-items: center; gap: 1px; height: 11px; padding-left: 2px; color: #222; background: #fff; border-bottom: 1px solid #bbb; }
.find .search { flex: 1; margin-left: 1px; }

.tree {
  display: grid;
  grid-auto-rows: 1fr;
  height: 184px;
  margin: 0;
  padding: 0;
  list-style: none;
  border-right: 4px solid #ddd;
  border-image: linear-gradient(#bbb 39%, #e4e4e4 39%) 1;
}
.tree li { display: grid; grid-template-columns: 11px 11px 1fr; min-width: 0; border-bottom: 1px solid #e2e2e2; }
.tree i { display: grid; place-items: center; background: #ececec; border-right: 1px solid #ddd; }
.tree span { display: flex; align-items: center; min-width: 0; white-space: nowrap; }
.tree b { width: 4px; }
.tree .dim { color: #999; }
.dim span svg { opacity: .5; }
.l0 { padding-left: 6px; }
.l1 { padding-left: 9px; }
.l2 { padding-left: 14px; }
.views { display: flex; height: 11px; border-top: 1px solid #aaa; border-bottom: 1px solid #888; }
.views button { width: 11px; }

.viewport {
  position: relative;
  flex: 1;
  min-width: 0;
  background: linear-gradient(#dadadb, #c3c2c6 50%, #a8a6ab);
}
.scene { width: 100%; height: 100%; }
.viewbar {
  position: absolute;
  left: 84px;
  top: 1px;
  display: flex;
  height: 10px;
  background: #f1f1f1;
  outline: 1px solid #bbb;
}
.viewbar button { width: 11px; }
.viewbar .split { width: 21px; gap: 2px; }
.viewbar .grip { width: 7px; background: #ddd; }

/* Vendor badge */
.astra {
  position: absolute;
  right: 93px;
  bottom: 57px;
  width: 82px;
  height: 21px;
  display: flex;
  align-items: center;
  justify-content: center;
  border: 1px solid #d5e5f0;
  border-radius: 4px;
  color: #e6f1f8;
  font: 12px/19px Roboto, "Liberation Sans", sans-serif;
  white-space: nowrap;
}
.astra svg { position: absolute; left: 35px; top: -6px; }
.astra sup { font-size: 4px; line-height: 4px; align-self: flex-start; padding-top: 4px; }
```
